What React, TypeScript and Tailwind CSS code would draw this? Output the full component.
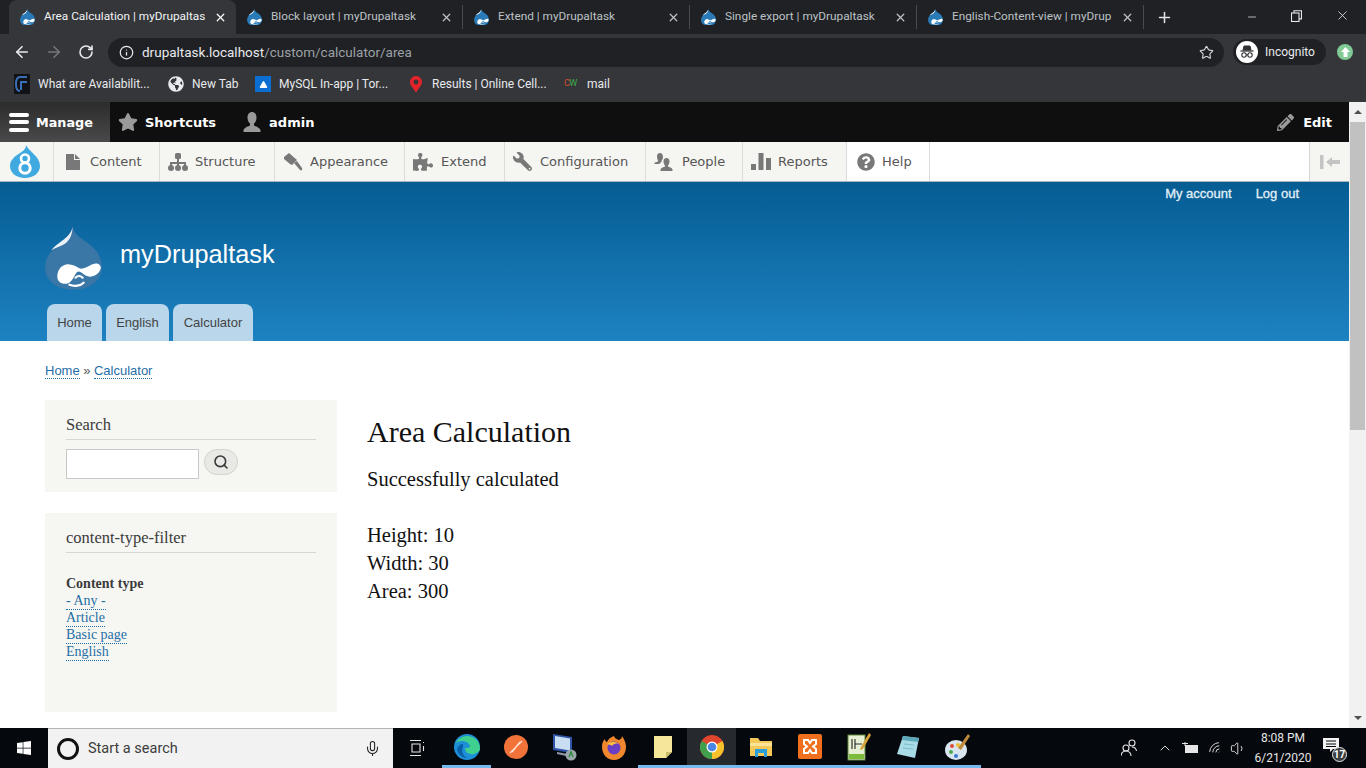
import React from 'react';
import { ArrowLeft, ArrowRight, RotateCw, Info, Star, Plus, X, Minus, Mic, ChevronUp, Search, Volume1, Wifi, Triangle } from 'lucide-react';
import { FaStar, FaPuzzlePiece, FaWrench, FaQuestionCircle, FaPencilAlt, FaWindows, FaGlobeAmericas, FaMapMarkerAlt } from 'react-icons/fa';

const sans = 'font-["Liberation_Sans",Arial,sans-serif]';
const dejavu = 'font-["DejaVu_Sans",Verdana,sans-serif]';
const serif = 'font-["Liberation_Serif","Times_New_Roman",serif]';
const ui = 'font-[Roboto,"Noto_Sans",sans-serif]';

const Drop = ({ size = 16, body = '#1f6fa8', fg = '#ffffff' }: { size?: number; body?: string; fg?: string }) => (
  <svg width={size} height={size * 1.12} viewBox="0 0 56 63" className="shrink-0">
    <path d="M27 0c1 8 8 12 14 16 9 6 15 14 15 25 0 13-12 22-28 22S0 54 0 41C0 29 8 22 16 16 21 12 26 8 27 0z" fill={body} />
    <path d="M27 1c-1 6-5 10-11 14-4 3-7 5-10 9 3-2 7-3 11-5 6-3 10-9 10-18z" fill={fg} opacity="0.9" />
    <path d="M12 50c0-8 6-13 12-12 6 0 9 5 13 4 5-1 9-5 13-5 3 0 5 2 5 4-1 6-6 9-11 9-5 0-8-5-11-5-2 0-3 3-5 6-2 3-4 6-8 6-5 0-8-3-8-7z" fill={fg} />
    <path d="M24 58c5 2 11 1 14-2M30 51c2-2 5-2 7 0" stroke={fg} strokeWidth="2.2" fill="none" strokeLinecap="round" />
  </svg>
);

const tabs = [
  { t: 'Area Calculation | myDrupaltas', active: true },
  { t: 'Block layout | myDrupaltask' },
  { t: 'Extend | myDrupaltask' },
  { t: 'Single export | myDrupaltask' },
  { t: 'English-Content-view | myDrup' },
];

const TabStrip = () => (
  <div className={`h-[34px] bg-[#202124] flex items-stretch pl-[9px] ${ui}`}>
    {tabs.map((tab, i) => (
      <div
        key={tab.t}
        className={`w-[227px] flex items-center pl-[11px] pr-[9px] text-[11.8px] ${
          tab.active ? 'bg-[#35363a] text-[#f1f3f4] rounded-t-[8px] mt-0' : 'text-[#bdc1c6]'
        } ${!tab.active && i > 0 && i < 5 ? 'border-r border-[#4a4b4f] my-[5px]' : ''}`}
      >
        <Drop size={15} body="#2a7ab8" />
        <span className="ml-[9px] flex-1 whitespace-nowrap">{tab.t}</span>
        <X size={13} strokeWidth={2.4} className={`shrink-0 ${tab.active ? 'text-white' : 'text-[#bdc1c6]'}`} />
      </div>
    ))}
    <div className="w-[40px] flex items-center justify-center text-[#dee1e6]">
      <Plus size={17} strokeWidth={2.2} />
    </div>
    <div className="flex-1" />
    <div className="flex items-center text-[#e8eaed]">
      <div className="w-[45px] flex justify-center"><Minus size={12} strokeWidth={1.5} /></div>
      <div className="w-[45px] flex justify-center pb-[3px]">
        <svg width="11" height="12" viewBox="0 0 11 12" fill="none" stroke="#e8eaed" strokeWidth="1.1">
          <rect x="0.5" y="3" width="7.5" height="8.5" />
          <path d="M3 3V0.7h7.5v8.2H8" />
        </svg>
      </div>
      <div className="w-[47px] flex justify-center pr-[1px] pb-[3px]"><X size={15} strokeWidth={1.3} /></div>
    </div>
  </div>
);

const AddressBar = () => (
  <div className={`h-[33px] bg-[#35363a] flex items-center pt-[3px] ${ui}`}>
    <div className="w-[108px] flex items-center pl-[13px] gap-[14px]">
      <ArrowLeft size={18} strokeWidth={2.2} className="text-[#e8eaed]" />
      <ArrowRight size={18} strokeWidth={2.2} className="text-[#75777b]" />
      <RotateCw size={16} strokeWidth={2.4} className="ml-[1px] text-[#e8eaed]" />
    </div>
    <div className="w-[1116px] h-[29px] rounded-full bg-[#202124] flex items-center pl-[11px] pr-[10px] text-[13.5px]">
      <Info size={15} strokeWidth={2} className="text-[#e8eaed]" />
      <span className="ml-[8px] text-[#e8eaed]">drupaltask.localhost</span>
      <span className="text-[#9aa0a6]">/custom/calculator/area</span>
      <Star size={15} strokeWidth={1.8} className="ml-auto text-[#d5d7da]" />
    </div>
    <div className="ml-[9px] w-[93px] h-[26px] rounded-full bg-[#202124] flex items-center pl-[3px] text-[12px] text-[#e8eaed]">
      <div className="w-[22px] h-[22px] rounded-full bg-white flex items-center justify-center">
        <svg width="16" height="16" viewBox="0 0 16 16" fill="none" stroke="#303134">
          <path d="M4 6l1-4h6l1 4z" fill="#303134" />
          <path d="M1.5 7h13" strokeWidth="1.3" />
          <circle cx="5" cy="11" r="2.2" strokeWidth="1.1" />
          <circle cx="11" cy="11" r="2.2" strokeWidth="1.1" />
          <path d="M7.2 11h1.6" strokeWidth="1" />
        </svg>
      </div>
      <span className="ml-[7px]">Incognito</span>
    </div>
    <div className="ml-[11px] w-[16px] h-[16px] rounded-full bg-[#81c995] flex items-center justify-center">
      <svg width="9" height="10" viewBox="0 0 9 10"><path d="M4.5 0L9 5H6.5v5h-4V5H0z" fill="#ffffff" /></svg>
    </div>
  </div>
);

const Bookmarks = () => (
  <div className={`h-[35px] bg-[#35363a] flex items-center pl-[14px] pb-[1px] text-[12px] text-[#e8eaed] ${ui}`}>
    <svg width="16" height="20" viewBox="0 0 16 20" className="shrink-0">
      <rect width="16" height="20" fill="#101216" />
      <path d="M13 3H6C3 3 2 6 2 10s1 7 4 7M13 8H7v8" stroke="#3b6fb5" strokeWidth="2" fill="none" />
    </svg>
    <span className="ml-[8px] w-[112px] whitespace-nowrap">What are Availabilit...</span>
    <FaGlobeAmericas size={16} className="ml-[18px] text-[#e8eaed]" />
    <span className="ml-[8px] w-[46px] whitespace-nowrap">New Tab</span>
    <div className="ml-[17px] w-[16px] h-[16px] bg-[#0a6fd1] flex items-center justify-center">
      <Triangle size={9} fill="#ffffff" strokeWidth={0} />
    </div>
    <span className="ml-[8px] w-[110px] whitespace-nowrap">MySQL In-app | Tor...</span>
    <FaMapMarkerAlt size={16} className="ml-[19px] text-[#e2232a]" />
    <span className="ml-[8px] w-[113px] whitespace-nowrap">Results | Online Cell...</span>
    <span className="ml-[19px] text-[9px] w-[15px] tracking-[-0.5px]">
      <span className="text-[#d6492f]">C</span>
      <span className="text-[#3fae49]">W</span>
    </span>
    <span className="ml-[8px]">mail</span>
  </div>
);

const Bust = ({ size = 20, color = '#9a9a9a' }: { size?: number; color?: string }) => (
  <svg width={size} height={size} viewBox="0 0 20 20" className="shrink-0">
    <path d="M10 0c3 0 4.500 2.500 4.500 5.500S13 11 12 11.500v2c1 1 6 1.500 6.500 5V20h-17v-1.500C2 15 7 14.500 8 13.500v-2C7 11 5.500 8.500 5.500 5.500S7 0 10 0z" fill={color} />
  </svg>
);

const AdminBar = () => (
  <div className={`h-[40px] bg-[#0f0f0f] flex items-stretch text-[13px] font-bold text-white ${dejavu}`}>
    <div className="w-[110px] bg-gradient-to-b from-[#2c2c2c] to-[#4a4a4a] flex items-center pl-[9px]">
      <div className="w-[20px] flex flex-col gap-[3.5px]">
        <div className="h-[4px] rounded-full bg-white" />
        <div className="h-[4px] rounded-full bg-white" />
        <div className="h-[4px] rounded-full bg-white" />
      </div>
      <span className="ml-[7px] pt-[1px] text-[12.8px]">Manage</span>
    </div>
    <div className="flex items-center pl-[8px]">
      <FaStar size={20} className="text-[#9a9a9a]" />
      <span className="ml-[7px] pt-[1px]">Shortcuts</span>
    </div>
    <div className="flex items-center pl-[26px]">
      <Bust />
      <span className="ml-[7px] pt-[1px]">admin</span>
    </div>
    <div className="ml-auto flex items-center pr-[17px]">
      <FaPencilAlt size={17} className="text-[#9a9a9a]" />
      <span className="ml-[9px] pt-[1px]">Edit</span>
    </div>
  </div>
);

const DocIcon = () => (
  <svg width="14" height="16" viewBox="0 0 14 16" fill="#787878"><path d="M0 0h8v6h6v10H0z" /><path d="M9 0l5 5H9z" /></svg>
);
const TreeIcon = () => (
  <svg width="20" height="18" viewBox="0 0 20 18" fill="#787878">
    <rect x="7" y="0" width="6" height="6" rx="1.500" />
    <path d="M9 5h2v4h7v4h-2v-2h-5v2H9v-2H4v2H2V9h7z" />
    <circle cx="3" cy="15" r="3" /><circle cx="10" cy="15" r="3" /><circle cx="17" cy="15" r="3" />
  </svg>
);
const GavelIcon = () => (
  <svg width="20" height="18" viewBox="0 0 20 18" fill="#787878">
    <path d="M6 0l8 7-5 5-2-1-6-5 0-2z" />
    <path d="M11 10l3-2 5 7c1 2-1 3-2 2z" />
  </svg>
);
const PeopleIcon = () => (
  <svg width="19" height="18" viewBox="0 0 19 18" fill="#787878">
    <path d="M6 0c2 0 3 2 3 4s-1 3-1.500 4v1L5 11 1 11c-1 0-1-1 0-1.500l3-1V7.500C3.500 6.500 3 5 3 3.500 3 1.500 4 0 6 0z" />
    <path d="M12.500 5c2 0 3 1.500 3 3.500s-1 3.500-1.500 4v1c1 .5 4 1 4.500 3V18H6.500v-1.500c.5-2 3.500-2.500 4.500-3v-1c-.5-.5-1.500-2-1.500-4S10.500 5 12.500 5z" />
  </svg>
);
const BarsIcon = () => (
  <svg width="20" height="18" viewBox="0 0 20 18" fill="#787878">
    <rect x="0" y="11" width="5" height="6" /><rect x="7.500" y="0" width="5" height="17" /><rect x="15" y="5" width="5" height="12" />
  </svg>
);

const trayItems = [
  { label: 'Content', w: 'w-[106px]', pl: 'pl-[12px]', gap: 'ml-[10px]', icon: <DocIcon /> },
  { label: 'Structure', w: 'w-[115px]', pl: 'pl-[8px]', gap: 'ml-[7px]', icon: <TreeIcon /> },
  { label: 'Appearance', w: 'w-[130px]', pl: 'pl-[8px]', gap: 'ml-[7px]', icon: <GavelIcon /> },
  { label: 'Extend', w: 'w-[100px]', pl: 'pl-[8px]', gap: 'ml-[8px]', icon: <FaPuzzlePiece size={20} color="#787878" /> },
  { label: 'Configuration', w: 'w-[141px]', pl: 'pl-[8px]', gap: 'ml-[8px]', icon: <FaWrench size={19} color="#787878" className="-scale-x-100" /> },
  { label: 'People', w: 'w-[97px]', pl: 'pl-[8px]', gap: 'ml-[9px]', icon: <PeopleIcon /> },
  { label: 'Reports', w: 'w-[104px]', pl: 'pl-[8px]', gap: 'ml-[7px]', icon: <BarsIcon /> },
  { label: 'Help', w: 'w-[83px]', pl: 'pl-[10px]', gap: 'ml-[7px]', icon: <FaQuestionCircle size={18} color="#787878" />, white: true },
];

const Tray = () => (
  <div className={`h-[40px] bg-white flex items-stretch border-b border-[#a9b4bb] text-[13px] text-[#565656] ${dejavu}`}>
    <div className="w-[54px] bg-[#f5f5f2] border-r border-[#dcdcdc] flex items-center justify-center pr-[3px]">
      <svg width="30" height="33" viewBox="0 0 30 33">
        <path d="M16 0c0 4-3 6-6 8C5 11 0 15 0 21c0 7 6.500 12 15 12s15-5 15-12C30 11 19 7 16 0z" fill="#3fa9e0" />
        <circle cx="15" cy="13.500" r="4" fill="none" stroke="#ffffff" strokeWidth="2.6" />
        <circle cx="15" cy="23" r="5.200" fill="none" stroke="#ffffff" strokeWidth="3" />
      </svg>
    </div>
    {trayItems.map((item) => (
      <div
        key={item.label}
        className={`${item.w} ${item.pl} flex items-center border-r border-[#dcdcdc] ${item.white ? 'bg-white' : 'bg-[#f5f5f2]'}`}
      >
        {item.icon}
        <span className={item.gap}>{item.label}</span>
      </div>
    ))}
    <div className="ml-auto w-[40px] bg-[#f5f5f2] border-l border-[#d6d6d6] flex items-center justify-center">
      <svg width="20" height="14" viewBox="0 0 20 14" fill="#c4c4c4">
        <rect x="0" y="0" width="3.500" height="14" />
        <path d="M6 7l6-5v3h8v4h-8v3z" />
      </svg>
    </div>
  </div>
);

const SiteHeader = () => (
  <div className={`h-[159px] bg-gradient-to-b from-[#055d93] to-[#1d82c2] flex flex-col ${sans}`}>
    <div className="h-[23px] flex items-center justify-end pr-[50px] gap-[24px] text-[13px] text-[#e3eff7]">
      <span className="[-webkit-text-stroke:0.3px_#e3eff7]">My account</span>
      <span className="[-webkit-text-stroke:0.3px_#e3eff7]">Log out</span>
    </div>
    <div className="flex items-center pl-[45px] h-[70px] mt-[15px]">
      <div className="w-[57px] mt-[6px]">
        <Drop size={57} body="#3a76a6" />
      </div>
      <span className="ml-[18px] text-[25.3px] text-white -mt-[1px]">myDrupaltask</span>
    </div>
    <div className="mt-auto flex gap-[4px] pl-[47px] text-[13px] text-[#444444]">
      {[
        ['Home', 'w-[55px]'],
        ['English', 'w-[63px]'],
        ['Calculator', 'w-[80px]'],
      ].map(([label, w]) => (
        <div key={label} className={`${w} h-[37px] rounded-t-[8px] bg-[#b9d6ea] flex items-center justify-center`}>
          {label}
        </div>
      ))}
    </div>
  </div>
);

const Dotted = ({ children, className = '' }: { children: React.ReactNode; className?: string }) => (
  <span className={`text-[#1f6ea6] border-b border-dotted border-[#1f6ea6] ${className}`}>{children}</span>
);

const Sidebar = () => (
  <aside className={`w-[292px] shrink-0 flex flex-col gap-[21px] ${serif}`}>
    <div className="h-[92px] bg-[#f6f6f2] px-[21px] pt-[14px]">
      <div className="h-[26px] border-b border-[#d6d6d2] text-[16.5px] leading-[21px] text-[#3b3b3b]">Search</div>
      <div className="mt-[9px] flex">
        <div className="w-[133px] h-[30px] bg-white border border-[#c8c8c8]" />
        <div className="ml-[5px] w-[34px] h-[26px] rounded-full bg-[#e9e9e6] border border-[#d2d2d0] flex items-center justify-center">
          <Search size={16} strokeWidth={2.4} className="text-[#3a3a3a]" />
        </div>
      </div>
    </div>
    <div className="h-[199px] bg-[#f6f6f2] px-[21px] pt-[14px]">
      <div className="h-[26px] border-b border-[#d6d6d2] text-[16.5px] leading-[21px] text-[#3b3b3b]">content-type-filter</div>
      <div className="mt-[22px] flex flex-col items-start text-[14px] leading-[16px]">
        <span className="font-bold text-[#3b3b3b] leading-[18px]">Content type</span>
        <Dotted>- Any -</Dotted>
        <Dotted>Article</Dotted>
        <Dotted>Basic page</Dotted>
        <Dotted>English</Dotted>
      </div>
    </div>
  </aside>
);

const Content = () => (
  <main className={`ml-[30px] text-[#111111] ${serif}`}>
    <h1 className="text-[30px] leading-[36px] mt-[14px]">Area Calculation</h1>
    <p className="text-[20.5px] leading-[28px] mt-[15px]">Successfully calculated</p>
    <div className="text-[20.5px] leading-[28px] mt-[28px]">
      <div>Height: 10</div>
      <div>Width: 30</div>
      <div>Area: 300</div>
    </div>
  </main>
);

const Scrollbar = () => (
  <div className="w-[17px] bg-[#f1f1f1] flex flex-col items-center">
    <div className="h-[20px] flex items-center justify-center">
      <div className="w-0 h-0 border-x-[4px] border-x-transparent border-b-[4px] border-b-[#505050]" />
    </div>
    <div className="w-[15px] h-[308px] bg-[#c1c1c1]" />
    <div className="mt-auto h-[20px] flex items-center justify-center">
      <div className="w-0 h-0 border-x-[4px] border-x-transparent border-t-[4px] border-t-[#505050]" />
    </div>
  </div>
);

const apps: { key: string; icon: React.ReactNode; on?: boolean; active?: boolean }[] = [
  {
    key: 'edge',
    on: true,
    icon: (
      <svg width="26" height="26" viewBox="0 0 26 26">
        <circle cx="13" cy="13" r="13" fill="#1d8fd8" />
        <path d="M26 15c0-8-6-13-13-13C7 2 3 6 2 9c3-3 12-3 14 3 0 2-3 2-5 2 0 4 4 7 9 6 3-1 6-3 6-5z" fill="#3fcf8e" />
        <path d="M9 13c-2 4 0 9 4 11-5 0-9-4-10-9 1-3 3-5 6-5z" fill="#0b5fa8" />
      </svg>
    ),
  },
  {
    key: 'postman',
    icon: (
      <svg width="24" height="24" viewBox="0 0 24 24">
        <circle cx="12" cy="12" r="12" fill="#f2733a" />
        <path d="M6 18L18 6M8 17l8-10" stroke="#ffe3d4" strokeWidth="1.300" />
      </svg>
    ),
  },
  {
    key: 'monitor',
    icon: (
      <svg width="26" height="28" viewBox="0 0 26 28">
        <path d="M1 1l19 3v16L1 17z" fill="#2f54a8" />
        <path d="M3 3l15 2.500v12L3 15z" fill="#c9def2" />
        <path d="M5 19l11 2-2 2-9-2z" fill="#8d98a6" />
        <circle cx="19" cy="22" r="5.500" fill="#9ba7a9" />
        <path d="M17 24l2-5 2 5" stroke="#2e8b3d" strokeWidth="1.400" fill="none" />
      </svg>
    ),
  },
  {
    key: 'firefox',
    icon: (
      <svg width="24" height="26" viewBox="0 0 24 26">
        <path d="M12 2c1 3 3 3 5 4 2-1 3-2 3-4 3 4 4 8 4 11 0 7-5 13-12 13S0 20 0 13C0 9 1 7 3 5c0 2 1 3 2 3 1-3 4-5 7-6z" fill="#f0862d" />
        <circle cx="12" cy="14" r="6.500" fill="#6b3fc4" />
        <path d="M5 10c3-2 8-3 12 0-3-1-6 0-7 2-1-1-3-2-5-2z" fill="#f7c23c" />
      </svg>
    ),
  },
  {
    key: 'sticky',
    on: true,
    icon: (
      <svg width="18" height="24" viewBox="0 0 18 24">
        <path d="M0 1h18v16l-6 6H0z" fill="#f4e79a" />
        <path d="M18 17h-6v6z" fill="#c9bc6a" />
      </svg>
    ),
  },
  {
    key: 'chrome',
    on: true,
    active: true,
    icon: (
      <svg width="24" height="24" viewBox="0 0 24 24">
        <circle cx="12" cy="12" r="12" fill="#e0452f" />
        <path d="M12 12L1.600 18A12 12 0 0 1 1.700 6z" fill="#3fa14c" />
        <path d="M12 12l10.400-6A12 12 0 0 1 12 24z" fill="#f7c12b" />
        <path d="M12 12L12 24A12 12 0 0 1 1.600 18z" fill="#3fa14c" />
        <circle cx="12" cy="12" r="5.500" fill="#ffffff" />
        <circle cx="12" cy="12" r="4.300" fill="#4a86e8" />
      </svg>
    ),
  },
  {
    key: 'explorer',
    on: true,
    icon: (
      <svg width="22" height="20" viewBox="0 0 22 20">
        <path d="M0 1h8l2 3h12v15H0z" fill="#f5c958" />
        <path d="M0 6h22v3H0z" fill="#fbe39a" />
        <path d="M5 12h12v8h-3v-4H8v4H5z" fill="#2d9fd8" />
      </svg>
    ),
  },
  {
    key: 'xampp',
    on: true,
    icon: (
      <svg width="24" height="25" viewBox="0 0 24 25">
        <rect width="24" height="25" rx="2" fill="#f0701e" />
        <path d="M6 6h4l2 3 2-3h4v4l-3 2.500 3 2.500v4h-4l-2-3-2 3H6v-4l3-2.500L6 10z" fill="none" stroke="#ffffff" strokeWidth="2" />
      </svg>
    ),
  },
  {
    key: 'npp',
    on: true,
    icon: (
      <svg width="24" height="30" viewBox="0 0 24 30">
        <rect x="1" y="3" width="17" height="25" fill="#e6efd4" stroke="#5c8a3a" />
        <path d="M2 22h15v5H2z" fill="#7dbb3c" />
        <path d="M5 7v10M8 7v10M8 12h7" stroke="#333333" strokeWidth="1.200" />
        <path d="M22 1l2 2-8 14-3 1 1-3z" fill="#d9a13a" />
      </svg>
    ),
  },
  {
    key: 'notepad',
    on: true,
    icon: (
      <svg width="22" height="26" viewBox="0 0 22 26">
        <path d="M6 2l16 2-4 20-18-4z" fill="#a8dbe6" />
        <path d="M6 2l16 2-1 4-16-2z" fill="#5ea7b8" />
        <path d="M7 10l10 1M6 14l10 1" stroke="#7cbccb" strokeWidth="1" />
      </svg>
    ),
  },
  {
    key: 'paint',
    on: true,
    icon: (
      <svg width="26" height="28" viewBox="0 0 26 28">
        <ellipse cx="12" cy="17" rx="11" ry="10" fill="#d9e6ef" />
        <circle cx="8" cy="13" r="2" fill="#e24b3b" />
        <circle cx="7" cy="19" r="2" fill="#4aa94a" />
        <circle cx="12" cy="23" r="2" fill="#3b78d8" />
        <circle cx="14" cy="12" r="2" fill="#f0c02e" />
        <path d="M24 1l2 2-9 14-3-2z" fill="#c08a3a" />
      </svg>
    ),
  },
];

const Taskbar = () => (
  <div className={`h-[40px] bg-[#05080d] flex items-stretch text-[#e6e6e6] ${ui}`}>
    <div className="w-[48px] flex items-center justify-center">
      <FaWindows size={16} className="text-white" />
    </div>
    <div className="w-[345px] bg-[#f2f2f2] border-t border-[#b4b4b4] flex items-center pl-[9px] pr-[12px] text-[#3c3c3c] text-[14.500px]">
      <div className="w-[22px] h-[22px] rounded-full border-[3px] border-[#111111]" />
      <span className="ml-[9px]">Start a search</span>
      <Mic size={17} strokeWidth={1.5} className="ml-auto text-[#222222]" />
    </div>
    <div className="w-[49px] flex items-center justify-center">
      <svg width="16" height="16" viewBox="0 0 16 16" fill="none" stroke="#e6e6e6" strokeWidth="1.100">
        <path d="M0 .5h11M0 15.500h11M2 4h8v8H2zM13.500 2v1M13.500 6v5" />
      </svg>
    </div>
    {apps.map((a) => (
      <div
        key={a.key}
        className={`w-[49px] flex items-center justify-center border-b-[3px] ${
          a.on ? 'border-[#76b9ed]' : 'border-transparent'
        } ${a.active ? 'bg-[#262a2f]' : ''}`}
      >
        {a.icon}
      </div>
    ))}
    <div className="flex-1" />
    <div className="flex items-center text-[#e6e6e6]">
      <svg width="16" height="18" viewBox="0 0 16 18" fill="none" stroke="#e6e6e6" strokeWidth="1.100" className="mr-[20px]">
        <circle cx="5" cy="9" r="3" /><path d="M0 17c0-3 2-5 5-5s5 2 5 5" />
        <circle cx="11" cy="4" r="3" /><path d="M11 8c2 0 4 1 4.500 4" />
      </svg>
      <ChevronUp size={16} strokeWidth={1.4} className="mr-[9px]" />
      <svg width="17" height="12" viewBox="0 0 17 12" fill="none" stroke="#e6e6e6" className="mr-[9px]">
        <path d="M0 1.500h6M3 0v4" /><rect x="3.500" y="3.500" width="12" height="7" fill="#e6e6e6" />
      </svg>
      <Wifi size={15} strokeWidth={1.4} className="mr-[7px] -rotate-45" />
      <Volume1 size={17} strokeWidth={1.3} className="mr-[9px]" />
      <div className="w-[54px] flex flex-col items-center text-[12px] leading-[20px] -mt-[1px]">
        <span>8:08 PM</span>
        <span>6/21/2020</span>
      </div>
      <div className="w-[56px] pl-[13px] flex items-center relative h-full">
        <svg width="16" height="14" viewBox="0 0 16 14" fill="#f2f2f2" className="-mt-[7px]">
          <path d="M0 0h16v11h-6l-3 3v-3H0z" />
          <path d="M3 3h10M3 6h10M3 8.500h10" stroke="#05080d" strokeWidth="1" />
        </svg>
        <div className="absolute left-[22px] bottom-[6px] w-[15px] h-[15px] rounded-full bg-[#3a3d40] border border-[#e6e6e6] flex items-center justify-center text-[10px] font-bold text-white">
          17
        </div>
      </div>
    </div>
  </div>
);

export default function App() {
  return (
    <div className="h-screen w-[1366px] flex flex-col overflow-hidden bg-white">
      <TabStrip />
      <AddressBar />
      <Bookmarks />
      <div className="flex-1 flex min-h-0">
        <div className="flex-1 min-w-0 flex flex-col">
          <AdminBar />
          <Tray />
          <SiteHeader />
          <div className={`pl-[45px] pt-[21px] text-[13px] leading-[17px] text-[#555555] ${sans}`}>
            <Dotted>Home</Dotted>
            <span className="mx-[3.5px]">»</span>
            <Dotted>Calculator</Dotted>
          </div>
          <div className="flex pl-[45px] pt-[21px]">
            <Sidebar />
            <Content />
          </div>
        </div>
        <Scrollbar />
      </div>
      <Taskbar />
    </div>
  );
}
